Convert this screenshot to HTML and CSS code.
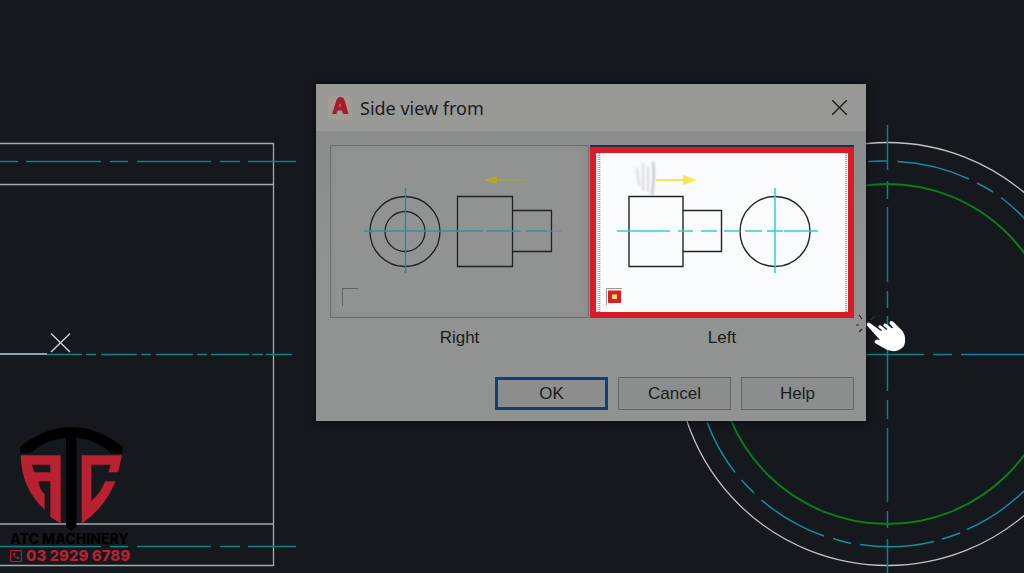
FILE: index.html
```html
<!DOCTYPE html>
<html lang="en">
<head>
<meta charset="utf-8">
<meta name="viewport" content="width=device-width, initial-scale=1">
<title>Side view from</title>
<link rel="stylesheet" href="styles.css">
</head>
<body>
<main class="canvas">
  <svg class="drawing" viewBox="0 0 1024 573" preserveAspectRatio="xMinYMin slice" fill="none" aria-hidden="true">
    <g stroke="#a4a7ac" stroke-width="1.3">
      <path d="M0 143.500H273.500V565.500H0M0 184.500H273.500M0 524H273.500"/>
      <circle cx="887.500" cy="354" r="211.500" stroke="#c3c1c5"/>
      <path d="M51 333.500L70 352M70 333.500L51 352" stroke="#d4d6d8"/>
    </g>
    <g stroke="#0d8187" stroke-width="1.5">
      <path d="M0 161.500H18M26 161.500H101M110 161.500H128M137 161.500H211M220 161.500H240M248 161.500H296"/>
      <path d="M137 546.500H211M220 546.500H240M248 546.500H296M0 546.500H101M110 546.500H128"/>
      <path d="M46 354.500H82M86 354.500H96M101 354.500H137M141 354.500H151M156 354.500H193M197 354.500H207M211 354.500H249M252 354.500H263M266 354.500H292"/>
      <path d="M866 354.500H924M933 354.500H952"/>
      <path d="M961 354.500H1024" stroke="#167eae"/>
      <path d="M887.500 125V170M887.500 181V199M887.500 291V308M887.500 316V391M887.500 400V419M887.500 511V528M887.500 539V573"/>
      <path d="M887.500 207V282M887.500 428V502" stroke="#19708c"/>
    </g>
    <path d="M0 354H47" stroke="#8ba4b5" stroke-width="2"/>
    <circle cx="887.500" cy="354" r="170" stroke="#08801a" stroke-width="1.900"/>
    <g stroke="#168c9b" stroke-width="1.500">
      <path d="M868 161.500A193 193 0 0 1 887 161M897.500 161.500A193 193 0 0 1 969 179M977 183A193 193 0 0 1 993 192M1001 197.500A193 193 0 0 1 1024 218"/>
      <path d="M707 422A193 193 0 0 0 735 472.500M741.500 480A193 193 0 0 0 754 493M761.500 500A193 193 0 0 0 824 536M833 538.500A193 193 0 0 0 851 543.500M860 544.500A193 193 0 0 0 934 541.500M942 539A193 193 0 0 0 960 533M967 529.500A193 193 0 0 0 1024 491"/>
    </g>
  </svg>

  <section class="dialog" role="dialog" aria-labelledby="dialog-title">
    <header class="titlebar">
      <svg class="app-icon" viewBox="0 0 24 24" aria-hidden="true">
        <path d="M0 0H24V24H0Z" fill="#a39b94"/>
        <path d="M4 18L8.500 4Q9.500 1 12.500 1Q15.500 1 16.500 4L20.500 18H15L14 14.500H9.500L8.500 18Z" fill="#a61e2d"/>
        <path d="M10.500 10.500L12 6.500L13.500 10.500Z" fill="#b9656c"/>
      </svg>
      <h1 class="title" id="dialog-title">Side view from</h1>
      <button class="close" type="button" aria-label="Close">
        <svg class="close-icon" viewBox="0 0 16 16" aria-hidden="true"><path d="M0 0L16 16M16 0L0 16" stroke="#161616" stroke-width="1.400"/></svg>
      </button>
    </header>
    <div class="body">
      <div class="views">
        <button class="view" type="button" aria-labelledby="view-right" aria-pressed="false">
          <svg class="view-art" viewBox="331 146 257 171" fill="none" aria-hidden="true">
            <path d="M490 180H527" stroke="#aeac29" stroke-width="1.200"/>
            <path d="M484 180L497 176V184Z" fill="#aeac29"/>
            <g stroke="#202122" stroke-width="1.300">
              <circle cx="405" cy="231.500" r="35"/>
              <circle cx="405" cy="231.500" r="20"/>
              <path d="M457.500 196.500H512.500V266.500H457.500ZM512.500 210.500H551.500V251.500H512.500"/>
            </g>
            <path d="M364 231H483M486 231H521M526 231H547" stroke="#3f8ca3" stroke-width="1.500"/>
            <path d="M547 231H562" stroke="#73898e"/>
            <path d="M405.500 188V273" stroke="#178ea9" stroke-width="1.300"/>
            <path d="M342.500 306V288.500H358" stroke="#636565"/>
          </svg>
        </button>
        <button class="view selected" type="button" aria-labelledby="view-left" aria-pressed="true">
          <svg class="view-art" viewBox="596 153 252 159" fill="none" aria-hidden="true">
            <defs>
              <filter id="soft" x="-50%" y="-50%" width="200%" height="200%"><feGaussianBlur stdDeviation="1.200"/></filter>
            </defs>
            <path d="M597 153V312M600 153V312" stroke="#b6a9bd" stroke-dasharray="1 1"/>
            <path d="M599 153V312M846 153V312" stroke="#655363" stroke-dasharray="1 1"/>
            <g filter="url(#soft)" stroke-width="2">
              <path d="M637 168L639 186M643 163V191M648 166V192" stroke="#d6d8e2"/>
              <path d="M653 162Q655 176 652 195" stroke="#b7bac6"/>
            </g>
            <path d="M656 180H684" stroke="#f5e654" stroke-width="2"/>
            <path d="M683 175L697 180L683 185Z" fill="#f5e654"/>
            <g stroke="#222427" stroke-width="1.400">
              <path d="M629 196.500H683V266.500H629ZM683 210.500H721.500V251.500H683"/>
              <circle cx="775" cy="231.500" r="35"/>
            </g>
            <path d="M617 231H670M678 231H693M701 231H717M724 231H740M745 231H762M767 231H783M784 231H818M775 188V273" stroke="#32cbdc" stroke-width="1.500"/>
            <path d="M606.500 305V288.500H622" stroke="#a19591"/>
            <path d="M608 290.500H621V303H608Z" fill="#d71f1d"/>
            <path d="M612 294.500H617V299H612Z" fill="#ffda7a"/>
          </svg>
        </button>
        <span class="view-name" id="view-right">Right</span>
        <span class="view-name" id="view-left">Left</span>
      </div>
      <footer class="actions">
        <button class="action primary" type="button">OK</button>
        <button class="action" type="button">Cancel</button>
        <button class="action" type="button">Help</button>
      </footer>
    </div>
  </section>

  <svg class="pointer" viewBox="0 0 60 50" aria-hidden="true">
    <path d="M9 5L12 9M6 15H9M12 19L9 22" stroke="#252728" stroke-width="1.200" fill="none"/>
    <path d="M21 10L25 6" stroke="#30383d" stroke-width="1" fill="none"/>
    <path d="M17 15.500Q16 11.500 20 13L31 21L32 20L28.500 17.500Q28 14.500 31 15.500L36.500 20L37.500 19L33.500 16Q33 12.500 36.500 14L42 18.500L43 17.500L39.500 13.500Q39.500 10 43 11.500L52.500 21Q57 28 54 36Q49 42 42 41Q36 40 32 37L25 33Q23.500 30.500 27 29.500L30 30Z" fill="#fff"/>
  </svg>

  <aside class="brand">
    <svg class="brand-mark" viewBox="60 50 309 312" aria-hidden="true">
      <path d="M60 129V110Q130 54 205 51H223Q298 54 369 110L366 129H334Q290 88 229 82V350L214 362L198 350V82Q134 89 90 129Z" fill="#000"/>
      <path fill-rule="evenodd" d="M62 135H182V340L151 319V213H115Q118 237 134 252V298Q64 235 62 135ZM95 163L103 186H151V163Z" fill="#b92131"/>
      <path d="M245 135H366L354 186H325L332 163H274V272Q303 248 315 213H346Q318 289 245 340Z" fill="#b92131"/>
    </svg>
    <span class="brand-name">ATC MACHINERY</span>
    <a class="phone" href="tel:0329296789">
      <svg class="phone-icon" viewBox="0 0 12 12" fill="none" stroke="#b92131" aria-hidden="true">
        <path d="M.5 .5H11.500V11.500H.5Z"/>
        <path d="M3 3Q3 8 9 9L9.500 7.500L7.500 6.500L6.500 7.500Q5 6.500 4.500 5L5.500 4.500L4.500 2.500Z" fill="#b92131" stroke="none"/>
      </svg>
      <span>03 2929 6789</span>
    </a>
  </aside>
</main>
</body>
</html>
```
FILE: styles.css
```css
* {
  box-sizing: border-box;
}

body {
  margin: 0;
  background: #15191d;
  font-family: "Liberation Sans", Arial, sans-serif;
  font-size: 17px;
  color: #1b1c1c;
}

button {
  font: inherit;
  color: inherit;
  padding: 0;
}

svg {
  display: block;
}

.canvas {
  position: relative;
  min-height: 100vh;
  overflow: hidden;
}

.drawing {
  position: absolute;
  inset: 0;
  width: 100%;
  height: 100%;
}

.dialog {
  position: absolute;
  left: 316px;
  top: 84px;
  width: 550px;
  background: linear-gradient(#898b8b, #919392 60%);
  box-shadow: 0 0 8px #080a10;
}

.titlebar {
  display: flex;
  align-items: center;
  height: 47px;
  padding: 0 18px 0 12px;
  background: #989997;
}

.app-icon {
  width: 24px;
  height: 24px;
}

.title {
  flex: 1;
  margin: 0 0 0 8px;
  font: 400 18px/24px "Noto Sans", sans-serif;
}

.close {
  border: 0;
  background: none;
}

.close-icon {
  width: 17px;
  height: 17px;
  padding: 1px;
}

.body {
  padding: 14px 12px 11px 14px;
}

.views {
  display: grid;
  grid-template-columns: 259fr 264fr;
  column-gap: 1px;
}

.view {
  border: 1px solid #6c6e70;
  background: #919392;
  box-shadow: inset 0 0 10px #888a8a;
}

.view-art {
  width: 100%;
  height: auto;
}

.selected {
  border: 6px solid #d91d26;
  margin-top: 2px;
  background: #fafbfc;
  box-shadow: 0 -2px 0 #282c48;
}

.view-name {
  padding-top: 10px;
  line-height: 20px;
  text-align: center;
}

.actions {
  display: flex;
  justify-content: flex-end;
  gap: 10px;
  padding-top: 29px;
}

.action {
  width: 113px;
  height: 33px;
  border: 1px solid #646767;
  background: #8c8e8e;
}

.primary {
  border: 3px solid #123f78;
}

.pointer {
  position: absolute;
  left: 850px;
  top: 310px;
  width: 60px;
  height: 50px;
}

.brand {
  position: absolute;
  left: 10px;
  top: 427px;
  display: flex;
  flex-direction: column;
  align-items: flex-start;
  font-family: Inter, sans-serif;
  font-weight: 800;
  white-space: nowrap;
}

.brand-mark {
  width: 103px;
  height: 104px;
  margin-left: 10px;
}

.brand-name {
  font-size: 14px;
  line-height: 16px;
  color: #000;
}

.phone {
  display: flex;
  align-items: center;
  gap: 4px;
  font-size: 15px;
  line-height: 18px;
  color: #b92131;
  text-decoration: none;
}

.phone-icon {
  width: 12px;
  height: 12px;
}
```
